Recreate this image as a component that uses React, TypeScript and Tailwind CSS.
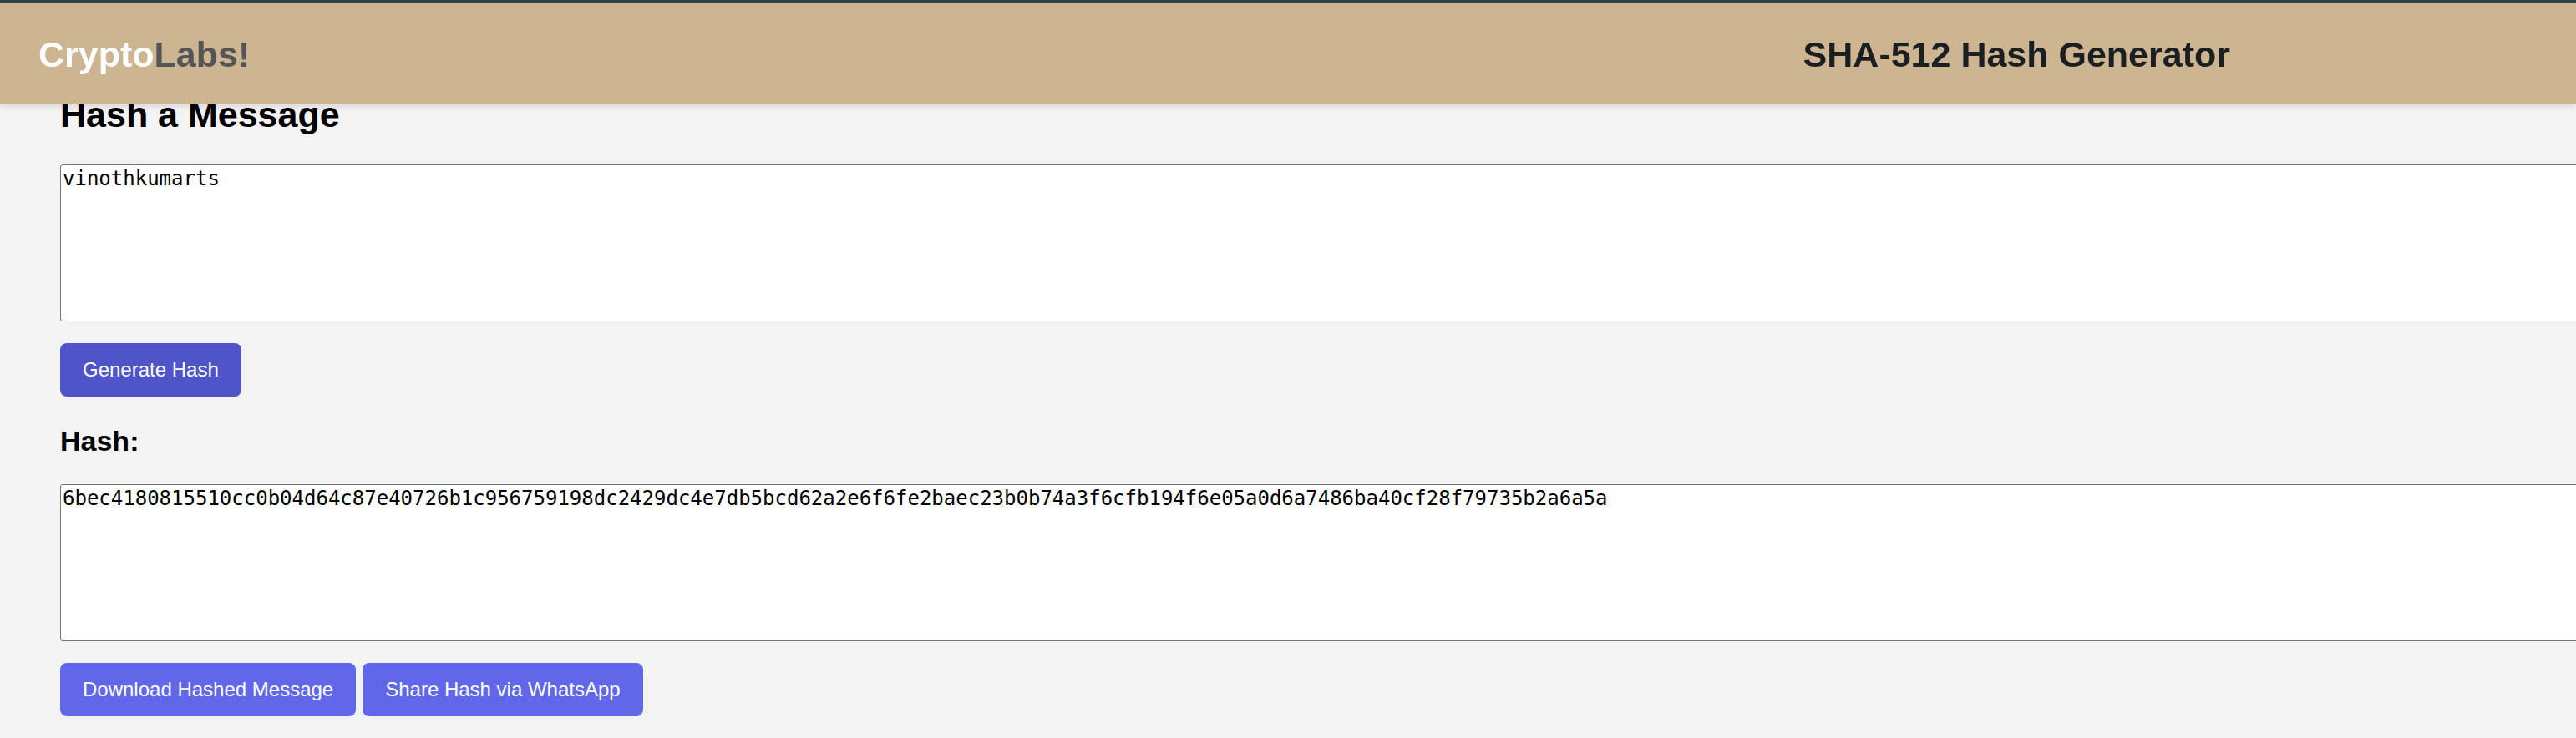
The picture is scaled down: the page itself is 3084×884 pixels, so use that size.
import { useState } from "react";

const HASH =
  "6bec4180815510cc0b04d64c87e40726b1c956759198dc2429dc4e7db5bcd62a2e6f6fe2baec23b0b74a3f6cfb194f6e05a0d6a7486ba40cf28f79735b2a6a5a";

const App = () => {
  const [message, setMessage] = useState("vinothkumarts");
  const [hash, setHash] = useState(HASH);

  return (
    <div className="relative h-[884px] w-full overflow-hidden bg-[#f3f3f3] font-['Liberation_Sans',Arial,sans-serif]">
      {/* fixed header, sits over the page */}
      <header className="fixed inset-x-0 top-0 z-10 flex h-[125px] items-center justify-between border-t-4 border-[#2f4142] bg-[#cdb592] pr-[414px] pl-[46px] shadow-[0_2px_8px_rgba(0,0,0,0.12)]">
        <div className="text-[43px] leading-[50px] font-bold">
          <span className="text-white">Crypto</span>
          <span className="text-[#555555]">Labs!</span>
        </div>
        <h1 className="text-[43px] leading-[50px] font-bold text-[#1c1f22]">
          SHA-512 Hash Generator
        </h1>
      </header>

      <main className="flex flex-col items-start pt-[112px] pl-[72px]">
        <h2 className="text-[43px] leading-[50px] font-bold text-black">
          Hash a Message
        </h2>

        <textarea
          value={message}
          onChange={(e) => setMessage(e.target.value)}
          className="mt-[35px] h-[188px] w-[3060px] resize-none rounded-[3px] border border-[#767676] bg-white p-[2px] font-['DejaVu_Sans_Mono',monospace] text-[24px] leading-[28px] text-black outline-none"
        />

        <button
          type="button"
          onClick={() => setHash(HASH)}
          className="mt-[26px] rounded-lg bg-[#4f54c9] px-[27px] py-[18px] text-[24px] leading-[28px] text-white"
        >
          Generate Hash
        </button>

        <h3 className="mt-[33px] text-[34px] leading-[40px] font-bold text-black">
          Hash:
        </h3>

        <textarea
          value={hash}
          readOnly
          className="mt-[32px] h-[188px] w-[3060px] resize-none rounded-[3px] border border-[#767676] bg-white p-[2px] font-['DejaVu_Sans_Mono',monospace] text-[24px] leading-[28px] text-black outline-none"
        />

        <div className="mt-[26px] flex gap-2">
          <button
            type="button"
            className="rounded-lg bg-[#6068e9] px-[27px] py-[18px] text-[24px] leading-[28px] text-white"
          >
            Download Hashed Message
          </button>
          <button
            type="button"
            className="rounded-lg bg-[#6068e9] px-[27px] py-[18px] text-[24px] leading-[28px] text-white"
          >
            Share Hash via WhatsApp
          </button>
        </div>
      </main>
    </div>
  );
};

export default App;
